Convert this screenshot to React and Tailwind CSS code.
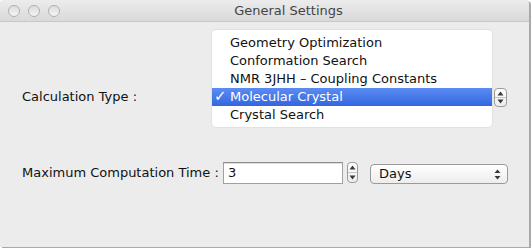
import React from 'react';

const items = [
  'Geometry Optimization',
  'Conformation Search',
  'NMR 3JHH – Coupling Constants',
  'Molecular Crystal',
  'Crystal Search',
];

// tiny up/down arrow pair used by steppers and popups
function Arrows({ className = '' }) {
  return (
    <svg width="7" height="11" viewBox="0 0 7 11" className={className}>
      <path d="M3.5 0.5 L6.5 4 L0.5 4 Z" fill="#3a3a3a" />
      <path d="M3.5 10.5 L6.5 7 L0.5 7 Z" fill="#3a3a3a" />
    </svg>
  );
}

function Stepper({ className = '' }) {
  return (
    <div className={`flex flex-col items-center justify-between rounded-[4px] border border-[#9c9c9c] bg-gradient-to-b from-white to-[#ededed] py-[2px] ${className}`}>
      <svg width="7" height="5" viewBox="0 0 7 5"><path d="M3.5 0.5 L6.5 4.5 L0.5 4.5 Z" fill="#3a3a3a" /></svg>
      <div className="h-px w-full bg-[#c4c4c4]" />
      <svg width="7" height="5" viewBox="0 0 7 5"><path d="M3.5 4.5 L6.5 0.5 L0.5 0.5 Z" fill="#3a3a3a" /></svg>
    </div>
  );
}

export default function App() {
  return (
    <div className="w-[531px] h-[248px] bg-white text-[13px] text-[#111]" style={{ fontFamily: '"DejaVu Sans", "Noto Sans", sans-serif' }}>
      <div className="w-[529px] h-[247px] bg-[#ececec] flex flex-col rounded-t-[4px] shadow-[2px_1px_0_0_#a9a9a9]">
        {/* title bar */}
        <div className="h-[22px] flex items-center rounded-t-[4px] bg-gradient-to-b from-[#ececec] to-[#d9d9d9] border-b border-[#c8c8c8] relative">
          <div className="flex gap-[8px] pl-[8px]">
            <span className="w-[12px] h-[12px] rounded-full border border-[#b0b0b0] bg-gradient-to-b from-[#dcdcdc] to-[#f4f4f4]" />
            <span className="w-[12px] h-[12px] rounded-full border border-[#b0b0b0] bg-gradient-to-b from-[#dcdcdc] to-[#f4f4f4]" />
            <span className="w-[12px] h-[12px] rounded-full border border-[#b0b0b0] bg-gradient-to-b from-[#dcdcdc] to-[#f4f4f4]" />
          </div>
          <div className="flex-1 text-center text-[#444] pr-[12px]">General Settings</div>
        </div>

        {/* body */}
        <div className="flex flex-col pt-[65px] pl-[22px]">
          <div className="flex items-center h-[20px]">
            <div className="w-[190px]">Calculation Type :</div>
            <div className="relative w-[295px] h-[19px]">
              {/* open popup menu */}
              <div className="absolute left-0 top-[-58px] w-[280px] h-[97px] bg-white rounded-[4px] shadow-[0_0_2px_rgba(0,0,0,0.15)] pt-[4px] z-10">
                {items.map((it) => {
                  const sel = it === 'Molecular Crystal';
                  return (
                    <div
                      key={it}
                      className={`h-[18px] flex items-center pl-[18px] relative ${sel ? 'bg-gradient-to-b from-[#5b8cf2] to-[#3366e0] text-white' : ''}`}
                    >
                      {sel && <span className="absolute left-[2px] text-[15px] font-bold leading-none">✓</span>}
                      {it}
                    </div>
                  );
                })}
              </div>
              <Stepper className="absolute right-0 top-0 w-[13px] h-[19px]" />
            </div>
          </div>

          <div className="flex items-center mt-[54px]">
            <div className="w-[201px]">Maximum Computation Time :</div>
            <div className="w-[120px] h-[22px] bg-white border border-[#a0a0a0] border-t-[#8c8c8c] flex items-center pl-[4px] shadow-[inset_0_1px_0_#e0e0e0]">3</div>
            <Stepper className="ml-[4px] w-[11px] h-[21px]" />
            <div className="ml-[12px] mt-[3px] w-[138px] h-[20px] rounded-[4px] border border-[#9a9a9a] bg-gradient-to-b from-white to-[#ededed] flex items-center justify-between pl-[8px] pr-[6px]">
              <span>Days</span>
              <Arrows />
            </div>
          </div>
        </div>
      </div>
    </div>
  );
}
